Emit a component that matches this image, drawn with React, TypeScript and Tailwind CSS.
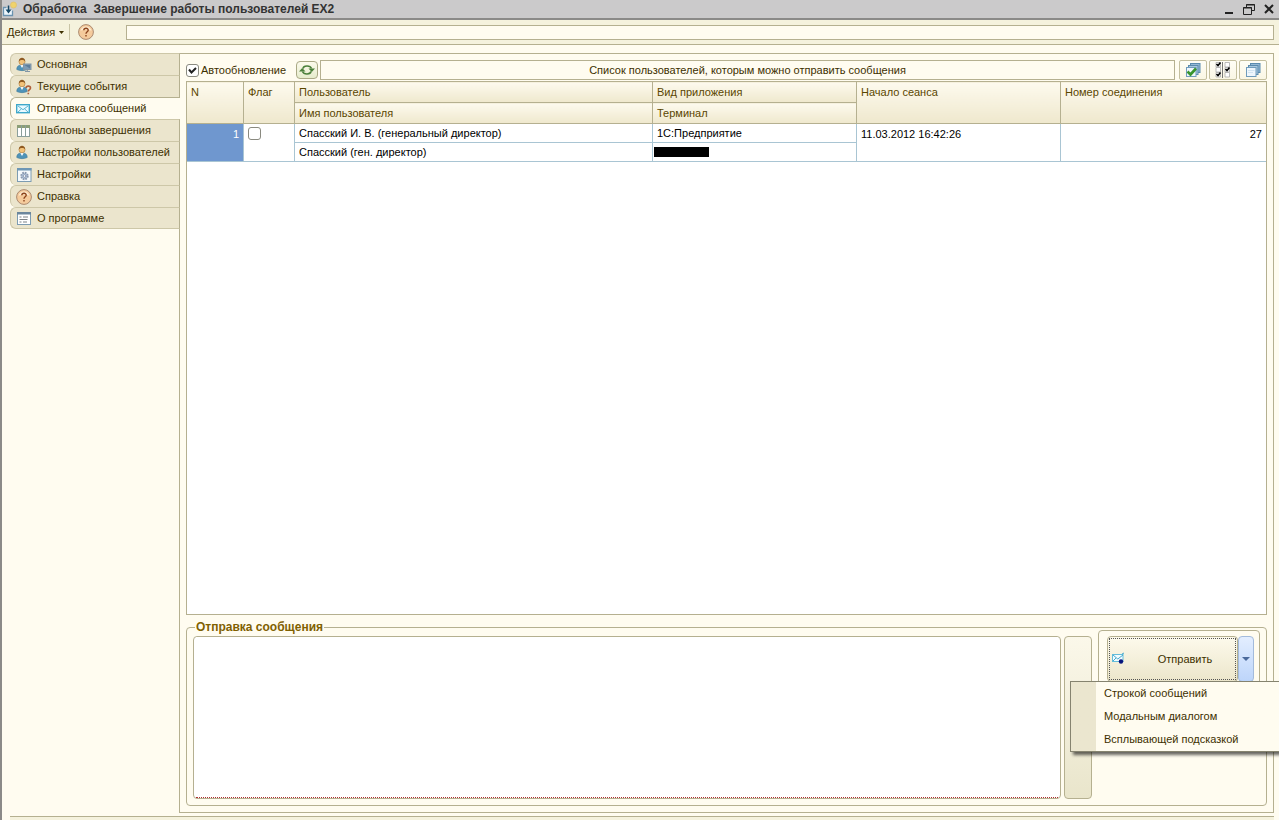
import React, { ReactNode } from 'react';
import clsx from 'clsx';

const PersonShape = () => (
  <>
    <path d="M.8 12.500c0-3.500 2-4.500 5.200-4.500s5.200 1 5.200 4.500c-3 1.500-7.400 1.500-10.400 0z" fill="#4f93b8" stroke="#3b7798" strokeWidth=".6" />
    <path d="M4.300 8 6 11l1.700-3z" fill="#fff" />
    <circle cx="6" cy="4.800" r="3" fill="#f2c27a" stroke="#b07a35" strokeWidth=".6" />
    <path d="M2.800 4.500c-.2-5 6.600-5 6.400 0-1.500-1.800-4.500-2-6.400 0z" fill="#8f5a22" />
  </>
);

const Svg = ({ children, size = 'size-4' }: { children: ReactNode; size?: string }) => (
  <svg viewBox="0 0 16 16" className={clsx('shrink-0', size)} fill="none" aria-hidden="true">{children}</svg>
);

const UserPcIcon = () => (
  <Svg>
    <PersonShape />
    <rect x="7.500" y="7" width="7.500" height="5.500" fill="#7d9bb5" stroke="#8195a6" />
    <path d="M8.500 8h5.500v3.500z" fill="#5c7d9b" />
    <path d="M11.300 12.500v2M9 14.500h5" stroke="#8195a6" />
  </Svg>
);

const UserQuestionIcon = () => (
  <Svg>
    <PersonShape />
    <path d="M10 9c.2-2.500 4.500-2.500 4.500 0 0 1.700-2.200 1.600-2.200 3.500M12.300 13.700v1.600" stroke="#b0603a" strokeWidth="1.600" />
  </Svg>
);

const UserIcon = () => <Svg><PersonShape /></Svg>;

const MailIcon = () => (
  <Svg>
    <rect x=".7" y="3.700" width="12.600" height="8" fill="#eafaff" stroke="#3fa8ca" strokeWidth="1.400" />
    <path d="m2 5 5 3.700L12 5M2 11l3.500-3.200M12 11 8.500 7.800" stroke="#5bb5d2" />
  </Svg>
);

const SendIcon = () => (
  <Svg>
    <rect x="1.500" y="3.500" width="10.500" height="7" fill="#f1fcff" stroke="#63bddb" />
    <path d="m2 4 4.800 4L12 4M2 10l3-3M11 3l2-1" stroke="#48a9cd" />
    <circle cx="10" cy="10.500" r="2.200" fill="#07157d" />
  </Svg>
);

const ColumnsIcon = () => (
  <Svg>
    <rect x="1.500" y="2.500" width="12" height="11" fill="#fff" stroke="#8b9f9b" />
    <path d="M1 2h13v3H1z" fill="#8d9f78" />
    <path d="M5.500 2v11.500M9.500 2v11.500" stroke="#8b9f9b" />
  </Svg>
);

const GearWindowIcon = () => (
  <Svg>
    <rect x="1.500" y="1.500" width="13.500" height="13" fill="#f6fafc" stroke="#7d9cb2" />
    <path d="M1 1h14.500v2.500H1z" fill="#6f97b5" />
    <circle cx="8.500" cy="9" r="3.200" fill="#b7c8df" stroke="#8a99ae" strokeWidth="2" strokeDasharray="1.600 .9" />
    <circle cx="8.500" cy="9" r="1.300" fill="#fff" stroke="#70839d" strokeWidth=".7" />
  </Svg>
);

const HelpIcon = () => (
  <Svg>
    <circle cx="8" cy="8" r="7.400" fill="#f5cb9c" stroke="#ab8a70" />
    <path d="M2.500 7c1-6 10-6 11 0-3-2-8-2-11 0z" fill="#fdebd0" />
    <path d="M5.800 6.300c.1-2.900 4.500-2.700 4.400-.1 0 1.600-2.200 1.600-2.200 3.500M8 11v1.500" stroke="#8b431c" strokeWidth="1.400" />
  </Svg>
);

const AboutIcon = () => (
  <Svg>
    <rect x="1.500" y="2.500" width="13" height="12" fill="#fff" stroke="#7d9cb2" />
    <path d="M1 2h14v2.500H1z" fill="#6b869c" />
    <path d="M3.500 7h2M7 7h5M3.500 9.500h8M3.500 12h2M7 12h4" stroke="#7d8286" />
  </Svg>
);

const RefreshIcon = () => (
  <Svg>
    <path d="M4 6.500C4.500 3.500 11 3 12.500 6.500M12 9.500c-.5 3-7 3.500-8.500 0" stroke="#4a7f3a" strokeWidth="1.600" />
    <path d="M9.500 6.500H16L12.800 10zM6.500 9.500H0L3.200 6z" fill="#4a7f3a" />
  </Svg>
);

const SheetsIcon = ({ checked }: { checked?: boolean }) => (
  <Svg>
    <rect x="5.500" y="1.500" width="9.500" height="9" fill="#94b9d5" stroke="#5a8bae" />
    <rect x="3.500" y="3.500" width="9.500" height="9" fill="#a9c8de" stroke="#5a8bae" />
    <rect x="1.500" y="5.500" width="9.500" height="9" fill="#eef6fc" stroke="#6f9bbb" />
    {checked ? (
      <path d="m2.500 9.500 3 3L11 6.500" stroke="#38952e" strokeWidth="2.600" />
    ) : (
      <path d="M3 8.500h6.500M3 10.500h5" stroke="#d1e4f1" />
    )}
  </Svg>
);

const InvertIcon = () => (
  <Svg>
    <path d="M1 .5h4.500v4.500H1zM1 5.500h4.500V10H1zM1 10.500h4.500V15H1zM10 .5h4.500v4.500H10zM10 5.500h4.500V10H10zM10 10.500h4.500V15H10z" fill="#fff" stroke="#aaa" strokeWidth=".8" />
    <path d="M7.500 0v16" stroke="#777" />
    <path d="m1.500 2 1.500 1.500 2.500-3M1.500 12 3 13.500l2.500-3M10.500 7 12 8.500l2.500-3" stroke="#000" strokeWidth="1.600" />
  </Svg>
);

const AppIcon = () => (
  <Svg>
    <path d="M4.500 6.500h-3v8h9v-5" fill="#edf6fc" stroke="#6b93b0" strokeWidth="1.300" />
    <path d="M6.500 4.500v5" stroke="#174968" strokeWidth="1.500" />
    <path d="M3.500 8.500h6l-3 4z" fill="#174968" />
    <circle cx="11.500" cy="4" r="3" fill="#f0d36c" stroke="#dfc06a" strokeWidth=".7" />
  </Svg>
);

const tabs = [
  { title: 'Основная', icon: UserPcIcon },
  { title: 'Текущие события', icon: UserQuestionIcon },
  { title: 'Отправка сообщений', icon: MailIcon },
  { title: 'Шаблоны завершения', icon: ColumnsIcon },
  { title: 'Настройки пользователей', icon: UserIcon },
  { title: 'Настройки', icon: GearWindowIcon },
  { title: 'Справка', icon: HelpIcon },
  { title: 'О программе', icon: AboutIcon },
];

const sendModes = ['Строкой сообщений', 'Модальным диалогом', 'Всплывающей подсказкой'];

const Check = ({ label, checked }: { label?: string; checked?: boolean }) => (
  <label className="flex items-center gap-0.5">
    <span className="relative flex size-[13px]">
      <input
        type="checkbox"
        defaultChecked={checked}
        aria-label={label ? undefined : 'Флаг'}
        className="peer size-[13px] appearance-none rounded-[3px] border border-[#8a8a80] bg-white"
      />
      <svg viewBox="0 0 13 13" className="pointer-events-none absolute inset-0 hidden peer-checked:block" fill="none" aria-hidden="true">
        <path d="m3 5.500 2.500 3L10 4" stroke="#222" strokeWidth="2" />
      </svg>
    </span>
    {label}
  </label>
);

const ToolButton = ({ label, children }: { label: string; children: ReactNode }) => (
  <button
    type="button"
    aria-label={label}
    className="flex h-5 w-7 items-center justify-center rounded-xs border border-[#c4bf9f] bg-linear-to-b from-[#fffef6] to-[#faf6e4]"
  >
    {children}
  </button>
);

const headCell = 'border border-[#b5b090] bg-linear-to-b from-[#fdfaee] to-[#efe8cd] px-1 text-left align-top font-normal leading-5';
const bodyCell = 'border border-[#a9c5d3] px-1 align-top leading-5';

const TitleBar = () => (
  <header className="flex h-5 items-center border-b-2 border-[#8b8a88] bg-[#cbcacb] pr-1 text-[#333]">
    <AppIcon />
    <h1 className="ml-[5px] flex-1 text-xs font-bold whitespace-pre">Обработка  Завершение работы пользователей EX2</h1>
    <div className="flex items-center gap-2">
      <button type="button" aria-label="Свернуть" className="size-3">
        <svg viewBox="0 0 12 12" aria-hidden="true"><path d="M2 9h8v2H2z" fill="#222" /></svg>
      </button>
      <button type="button" aria-label="Восстановить" className="size-3">
        <svg viewBox="0 0 12 12" fill="none" stroke="#222" aria-hidden="true">
          <path d="M3.500 4V1.500h8v6H9M3 2h9M.5 4.500h8v7h-8zM0 5h9" />
        </svg>
      </button>
      <button type="button" aria-label="Закрыть" className="size-3">
        <svg viewBox="0 0 12 12" fill="none" aria-hidden="true"><path d="m2 2 8 8M10 2l-8 8" stroke="#222" strokeWidth="2" /></svg>
      </button>
    </div>
  </header>
);

const ActionBar = () => (
  <div className="flex h-[25px] shrink-0 items-center border-b border-[#b5b090] bg-[#f5f2dd] pr-[5px] pl-[5px]">
    <button type="button" className="flex items-center gap-1 pr-[5px]">
      Действия
      <svg viewBox="0 0 5 3" className="h-[3px] w-[5px]" aria-hidden="true"><path d="M0 0h5L2.500 3z" fill="#3d3000" /></svg>
    </button>
    <span className="mr-2 h-4 w-px bg-[#c9c4a6]" />
    <button type="button" aria-label="Справка"><HelpIcon /></button>
    <input type="text" readOnly aria-label="Состояние" className="ml-8 h-[15px] min-w-0 flex-1 border border-[#b5b090] bg-[#fffcf0]" />
  </div>
);

const UsersTable = () => (
  <div className="min-h-0 flex-1 overflow-hidden border border-[#b5b090] bg-white">
    <table className="-mt-px -ml-px w-[calc(100%+2px)] table-fixed border-collapse">
      <colgroup>
        <col className="w-[57px]" />
        <col className="w-[51px]" />
        <col />
        <col className="w-[204px]" />
        <col className="w-[204px]" />
        <col className="w-[206px]" />
      </colgroup>
      <thead className="text-[#5a4600]">
        <tr className="h-[21px]">
          <th rowSpan={2} className={headCell}>N</th>
          <th rowSpan={2} className={headCell}>Флаг</th>
          <th className={headCell}>Пользователь</th>
          <th className={headCell}>Вид приложения</th>
          <th rowSpan={2} className={headCell}>Начало сеанса</th>
          <th rowSpan={2} className={headCell}>Номер соединения</th>
        </tr>
        <tr className="h-[21px]">
          <th className={headCell}>Имя пользователя</th>
          <th className={headCell}>Терминал</th>
        </tr>
      </thead>
      <tbody className="text-black">
        <tr className="h-[19px]">
          <td rowSpan={2} className={clsx(bodyCell, 'bg-[#6f97cf] text-right text-white')}>1</td>
          <td rowSpan={2} className={clsx(bodyCell, 'pt-[3px]')}><Check /></td>
          <td className="border border-[#a9c5d3] px-1 leading-[18px]">Спасский И. В. (генеральный директор)</td>
          <td className="border border-[#a9c5d3] px-1 leading-[18px]">1С:Предприятие</td>
          <td rowSpan={2} className={bodyCell}>11.03.2012 16:42:26</td>
          <td rowSpan={2} className={clsx(bodyCell, 'text-right')}>27</td>
        </tr>
        <tr className="h-[19px]">
          <td className="border border-[#a9c5d3] px-1 leading-[18px]">Спасский (ген. директор)</td>
          <td className="border border-[#a9c5d3] px-px align-middle"><div className="h-2.5 w-[55px] bg-black" /></td>
        </tr>
      </tbody>
    </table>
  </div>
);

const SendButton = () => (
  <div className="relative flex h-[46px]">
    <button
      type="button"
      className="flex min-w-0 flex-1 items-center rounded-sm border border-[#b5b090] bg-linear-to-b from-[#fdfaec] to-[#ece6cb] p-px"
    >
      <span className="flex h-full w-full items-center border border-dotted border-[#555] pl-px">
        <SendIcon />
        <span className="flex-1 pl-2 text-center">Отправить</span>
      </span>
    </button>
    <button
      type="button"
      aria-label="Способ отправки"
      className="flex w-4 items-center justify-center rounded-sm border border-[#a3bbdc] bg-linear-to-b from-[#e3eeff] to-[#bdd5fa]"
    >
      <svg viewBox="0 0 8 4" className="h-1 w-2" aria-hidden="true"><path d="M0 0h8L4 4z" fill="#4a6a9c" /></svg>
    </button>
    <ul
      role="menu"
      className="absolute top-[45px] -right-[26px] z-10 w-[210px] border border-r-0 border-[#85836f] bg-linear-to-r from-[#ebe6cf] from-[25px] to-[#fffcf0] to-[25px] shadow-[3px_3px_3px_rgba(0,0,0,0.6)]"
    >
      {sendModes.map((mode) => (
        <li key={mode} role="none">
          <button type="button" role="menuitem" className="flex h-[23px] w-full items-center pl-[33px]">{mode}</button>
        </li>
      ))}
    </ul>
  </div>
);

const MessageBox = () => (
  <fieldset className="mt-[5px] shrink-0 rounded-sm border border-[#b5b090] px-1.5 pb-1.5">
    <legend className="ml-0.5 px-px text-xs leading-[14px] font-bold text-[#806000]">Отправка сообщения</legend>
    <div className="flex h-[165px] gap-[3px]">
      <div className="mt-0.5 flex min-w-0 flex-1 rounded-sm border border-[#b5b090] bg-white px-0.5">
        <textarea
          aria-label="Текст сообщения"
          className="w-full resize-none border-b border-dotted border-b-[#b03030] bg-white px-1 outline-none"
        />
      </div>
      <button
        type="button"
        aria-label="Шаблоны"
        className="mt-0.5 w-7 rounded-sm border border-[#b5b090] bg-linear-to-b from-[#fbf8ea] to-[#e9e5cb]"
      />
      <div className="-mt-1 ml-[3px] w-[162px]">
        <div className="h-16 rounded-sm border border-[#b5b090] pt-[5px] pr-[5px] pl-2">
          <SendButton />
        </div>
      </div>
    </div>
  </fieldset>
);

export default function App() {
  return (
    <div className="flex h-screen min-h-[480px] flex-col overflow-hidden border-l-2 border-[#8b8a88] bg-[#fffcf0] font-['Liberation_Sans',Arial,sans-serif] text-[11px] text-[#3d3000]">
      <TitleBar />
      <ActionBar />
      <main className="flex min-h-0 flex-1 pt-2 pr-[5px] pb-[3px] pl-2">
        <nav className="z-[1] -mr-px w-[170px] shrink-0">
          {tabs.map(({ title, icon: Icon }) => {
            const active = title === 'Отправка сообщений';
            return (
              <button
                key={title}
                type="button"
                className={clsx(
                  'flex h-[22px] w-full items-center gap-[5px] rounded-l-md border-t border-l pl-[5px] whitespace-nowrap last:border-b',
                  active ? 'border-[#b5b090] bg-[#fffcf0]' : 'border-r border-[#cdc7a8] border-r-[#b5b090] bg-[#ebe5cd]',
                )}
              >
                <Icon />
                {title}
              </button>
            );
          })}
        </nav>
        <section className="flex min-w-0 flex-1 flex-col border border-[#b5b090] p-1.5">
          <div className="mb-px flex h-5 items-center">
            <Check label="Автообновление" checked />
            <button
              type="button"
              aria-label="Обновить"
              className="mr-0.5 ml-2.5 flex h-[18px] w-[22px] items-center justify-center rounded-sm border border-[#aaa985] bg-linear-to-b from-[#fcfaec] to-[#e6eccc]"
            >
              <RefreshIcon />
            </button>
            <div className="mr-1 flex h-5 min-w-0 flex-1 items-center justify-center border border-[#b5b090]">
              Список пользователей, которым можно отправить сообщения
            </div>
            <div className="flex gap-0.5">
              <ToolButton label="Отметить все"><SheetsIcon checked /></ToolButton>
              <ToolButton label="Инвертировать"><InvertIcon /></ToolButton>
              <ToolButton label="Снять отметки"><SheetsIcon /></ToolButton>
            </div>
          </div>
          <UsersTable />
          <MessageBox />
        </section>
      </main>
      <footer className="ml-2 mr-[5px] h-1 shrink-0 border-t border-[#b5b090] bg-[#f5f2dd]" />
    </div>
  );
}
